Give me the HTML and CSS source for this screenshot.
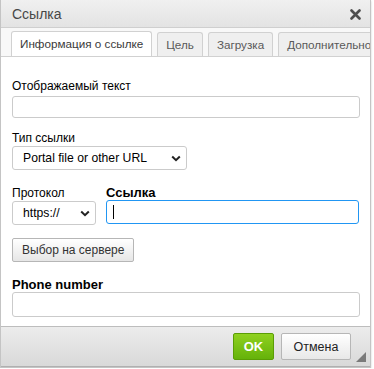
FILE: index.html
```html
<!DOCTYPE html>
<html lang="ru">
<head>
    <meta charset="UTF-8">
    <title>Ссылка</title>
    <link rel="stylesheet" href="styles.css">
</head>
<body>
    <div class="dialog">
        <div class="dialog-title">
            <span>Ссылка</span>
            <a class="close" href="#" title="Закрыть">
                <svg width="11" height="11" viewBox="0 0 11 11"><path d="M1.5 1.5 L9.5 9.5 M9.5 1.5 L1.5 9.5" stroke="#4d4d4d" stroke-width="2.6" stroke-linecap="round"/></svg>
            </a>
        </div>
        <div class="tabs">
            <a class="tab active" href="#">Информация о ссылке</a>
            <a class="tab" href="#">Цель</a>
            <a class="tab" href="#">Загрузка</a>
            <a class="tab" href="#">Дополнительно</a>
        </div>
        <div class="dialog-body">
            <div class="field field-text">
                <label for="displayText">Отображаемый текст</label>
                <input type="text" id="displayText" class="text-input">
            </div>
            <div class="field field-type">
                <label>Тип ссылки</label>
                <div class="select type-select">
                    <span>Portal file or other URL</span>
                    <svg width="10" height="7" viewBox="0 0 10 7"><path d="M1.2 1.5 L5 5.2 L8.8 1.5" fill="none" stroke="#222" stroke-width="2"/></svg>
                </div>
            </div>
            <div class="row">
                <div class="field">
                    <label>Протокол</label>
                    <div class="select proto-select">
                        <span>https://</span>
                        <svg width="10" height="7" viewBox="0 0 10 7"><path d="M1.2 1.5 L5 5.2 L8.8 1.5" fill="none" stroke="#222" stroke-width="2"/></svg>
                    </div>
                </div>
                <div class="field grow">
                    <label class="bold">Ссылка</label>
                    <div class="url-input"><span class="caret"></span></div>
                </div>
            </div>
            <button class="btn" type="button">Выбор на сервере</button>
            <div class="field phone">
                <label class="bold" for="phone">Phone number</label>
                <input type="text" id="phone" class="text-input">
            </div>
        </div>
        <div class="dialog-footer">
            <button class="btn-ok" type="button">OK</button>
            <button class="btn-cancel" type="button">Отмена</button>
            <span class="grip"></span>
        </div>
    </div>
</body>
</html>
```

FILE: styles.css
```css
body {
    margin: 0;
    background-color: #fff;
    font-family: "Liberation Sans", Arial, sans-serif;
    font-size: 12px;
    color: #000;
}
.dialog {
    width: 369px;
    border: 1px solid #c4c4c4;
    border-top: none;
    background-color: #fff;
    box-shadow: 0 1px 2px rgba(0, 0, 0, 0.2);
}
.dialog-title {
    height: 27px;
    display: flex;
    align-items: center;
    justify-content: space-between;
    padding: 0 9px 0 11px;
    background: linear-gradient(#f0f0f0, #e3e3e3);
    border-bottom: 1px solid #cfcfcf;
    font-size: 14px;
    color: #474747;
}
.close {
    display: flex;
    padding-top: 1px;
}
.tabs {
    display: flex;
    gap: 5px;
    height: 28px;
    padding-left: 10px;
    align-items: flex-end;
    background-color: #f8f8f8;
    border-bottom: 1px solid #d1d1d1;
    overflow: hidden;
}
.tab {
    display: block;
    flex-shrink: 0;
    height: 23px;
    line-height: 23px;
    padding: 0 8px;
    border: 1px solid #d1d1d1;
    border-bottom: none;
    border-radius: 3px 3px 0 0;
    background-color: #efefef;
    color: #595959;
    font-size: 11.7px;
    text-decoration: none;
    white-space: nowrap;
}
.tab.active {
    height: 25px;
    line-height: 24px;
    background-color: #fff;
    margin-bottom: -1px;
    color: #3a3a3a;
}
.dialog-body {
    padding: 22px 11px 9px 11px;
    display: flex;
    flex-direction: column;
}
.field {
    display: flex;
    flex-direction: column;
}
label {
    line-height: 14px;
    margin-bottom: 1px;
}
label.bold {
    font-weight: bold;
    font-size: 13px;
    margin-bottom: 0;
}
.field-text {
    margin-bottom: 13px;
}
.field-text label {
    margin-bottom: 3px;
}
.field-type {
    margin-bottom: 16px;
}
.text-input {
    width: 348px;
    height: 22px;
    box-sizing: border-box;
    border: 1px solid #cbcbcb;
    border-radius: 3px;
    font: inherit;
}
.select {
    box-sizing: border-box;
    height: 24px;
    border: 1px solid #cbcbcb;
    border-radius: 3px;
    display: flex;
    align-items: center;
    justify-content: space-between;
    padding: 0 5px 0 10px;
    font-size: 12.2px;
}
.type-select {
    width: 175px;
}
.proto-select {
    width: 84px;
}
.row {
    display: flex;
    gap: 10px;
    margin-bottom: 13px;
}
.grow {
    flex: 1;
}
.url-input {
    height: 24px;
    box-sizing: border-box;
    border: 1px solid #2196f3;
    border-radius: 3px;
    display: flex;
    align-items: center;
    padding-left: 6px;
}
.caret {
    width: 1px;
    height: 14px;
    background-color: #000;
}
.btn {
    align-self: flex-start;
    height: 24px;
    padding: 0 9px;
    font: inherit;
    color: #333;
    border: 1px solid #b6b6b6;
    border-radius: 2px;
    background: linear-gradient(#fff, #e6e6e6);
}
.phone {
    margin-top: 16px;
}
.phone .text-input {
    height: 25px;
}
.dialog-footer {
    height: 39px;
    display: flex;
    align-items: center;
    justify-content: flex-end;
    gap: 7px;
    padding-right: 19px;
    border-top: 1px solid #bdbdbd;
    border-bottom: 1px solid #b0b0b0;
    background: linear-gradient(#ececec, #d9d9d9);
    position: relative;
}
.btn-ok {
    width: 41px;
    height: 27px;
    font: bold 13px "Liberation Sans", Arial, sans-serif;
    color: #fff;
    border: 1px solid #5a9d05;
    border-radius: 2px;
    background: linear-gradient(#8fd11f, #65b20a);
}
.btn-cancel {
    width: 70px;
    height: 27px;
    font: 12.5px "Liberation Sans", Arial, sans-serif;
    color: #222;
    border: 1px solid #b6b6b6;
    border-radius: 2px;
    background: linear-gradient(#fff, #e8e8e8);
}
.grip {
    position: absolute;
    right: 4px;
    bottom: 4px;
    width: 0;
    height: 0;
    border-left: 10px solid transparent;
    border-bottom: 10px solid #7a7a7a;
}
```
